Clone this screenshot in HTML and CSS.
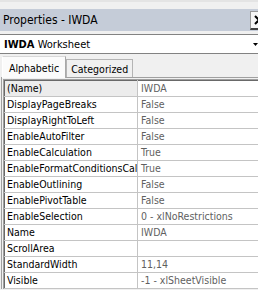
FILE: index.html
```html
<!DOCTYPE html>
<html lang="en">
<head>
  <meta charset="UTF-8">
  <meta name="viewport" content="width=device-width, initial-scale=1.0">
  <title>Properties - IWDA</title>
  <link rel="stylesheet" href="styles.css">
</head>
<body>

  <div class="janela">
    <div class="faixa-topo"></div>

    <div class="barra-titulo">
      <span class="titulo">Properties - IWDA</span>
      <button class="botao-fechar" aria-label="Close">
        <svg width="10" height="10" viewBox="0 0 10 10">
          <path d="M1 1 L9 9 M9 1 L1 9" stroke="#000" stroke-width="2"/>
        </svg>
      </button>
    </div>

    <div class="seletor-objeto">
      <span><b>IWDA</b> Worksheet</span>
      <svg class="seta" width="5" height="3" viewBox="0 0 5 3">
        <path d="M0 0 L2.5 3 L5 0" fill="#000"/>
      </svg>
    </div>

    <div class="abas">
      <span class="aba ativa">Alphabetic</span>
      <span class="aba">Categorized</span>
    </div>

    <div class="painel">
      <div class="moldura-grade">
        <table class="grade">
          <tr class="selecionada"><td class="chave">(Name)</td><td class="valor">IWDA</td></tr>
          <tr><td class="chave">DisplayPageBreaks</td><td class="valor">False</td></tr>
          <tr><td class="chave">DisplayRightToLeft</td><td class="valor">False</td></tr>
          <tr><td class="chave">EnableAutoFilter</td><td class="valor">False</td></tr>
          <tr><td class="chave">EnableCalculation</td><td class="valor">True</td></tr>
          <tr><td class="chave">EnableFormatConditionsCalculation</td><td class="valor">True</td></tr>
          <tr><td class="chave">EnableOutlining</td><td class="valor">False</td></tr>
          <tr><td class="chave">EnablePivotTable</td><td class="valor">False</td></tr>
          <tr><td class="chave">EnableSelection</td><td class="valor">0 - xlNoRestrictions</td></tr>
          <tr><td class="chave">Name</td><td class="valor">IWDA</td></tr>
          <tr><td class="chave">ScrollArea</td><td class="valor"></td></tr>
          <tr><td class="chave">StandardWidth</td><td class="valor">11,14</td></tr>
          <tr><td class="chave">Visible</td><td class="valor">-1 - xlSheetVisible</td></tr>
        </table>
      </div>
    </div>
  </div>

</body>
</html>
```

FILE: styles.css
```css
:root {
  --fundo: #f0f0f0;
  --titulo-bg: #c5ccd8;
  --linha-grade: #c4c4c4;
  --borda-escura: #696969;
  --borda-media: #a0a0a0;
  --texto-valor: #5f5f5f;
}

body {
  margin: 0;
  background-color: var(--fundo);
  color: #000;
  font-family: "DejaVu Sans Condensed", "DejaVu Sans", sans-serif;
  font-stretch: condensed;
  font-size: 10.5px;
  overflow: hidden; /* a janela continua para a direita, cortada */
}

.janela {
  width: 268px;
}

.faixa-topo {
  height: 9px;
  box-sizing: border-box;
  border-top: 2px solid #e4e4e4;
}

.barra-titulo {
  height: 22px;
  background-color: var(--titulo-bg);
  display: flex;
  align-items: center;
  justify-content: space-between;
  padding-left: 3px;
}

.titulo {
  font-size: 12px;
}

.botao-fechar {
  width: 18px;
  height: 19px;
  padding: 0;
  margin: 0;
  display: flex;
  align-items: center;
  justify-content: center;
  background-color: #f6f6f6;
  border: 1px solid #9a9a9a;
  border-bottom: 2px solid #404040;
}

.seletor-objeto {
  margin-top: 3px;
  height: 18px;
  font-size: 11px;
  background-color: #fff;
  border-top: 1px solid #828282;
  border-bottom: 1px solid #828282;
  display: flex;
  align-items: center;
  justify-content: space-between;
  padding: 0 10px 0 4px;
}

.abas {
  height: 23px;
  display: flex;
  align-items: flex-end;
  padding-left: 2px;
}

.aba {
  height: 18px;
  box-sizing: border-box;
  display: flex;
  align-items: center;
  padding: 0 4px;
  border: 1px solid #b4b4b4;
  border-bottom: none;
}

.aba.ativa {
  height: 22px;
  padding: 0 6px;
  background-color: #fbfbfb;
  border-color: #d8d8d8 #a8a8a8 transparent #fff;
  margin-bottom: -1px;
  position: relative; /* fica por cima da borda do painel */
}

.painel {
  margin-left: 1px;
  border-top: 1px solid var(--borda-media);
  border-left: 1px solid var(--borda-media);
  padding: 1px 0 0 1px;
}

.moldura-grade {
  border-top: 1px solid var(--borda-media);
  border-left: 1px solid var(--borda-media);
}

.grade {
  border-collapse: collapse;
  table-layout: fixed;
  width: 262px;
  border-top: 1px solid var(--borda-escura);
  border-left: 1px solid var(--borda-escura);
  background-color: #fff;
}

.grade td {
  height: 15px;
  padding: 0;
  border-bottom: 1px solid var(--linha-grade);
  white-space: nowrap;
  overflow: hidden;
  line-height: 15px;
}

.chave {
  width: 130px;
  padding-left: 2px !important;
  border-right: 1px solid var(--linha-grade);
}

.valor {
  padding-left: 3px !important;
  color: var(--texto-valor);
}

.selecionada .chave {
  background-color: #ececec;
}
```
